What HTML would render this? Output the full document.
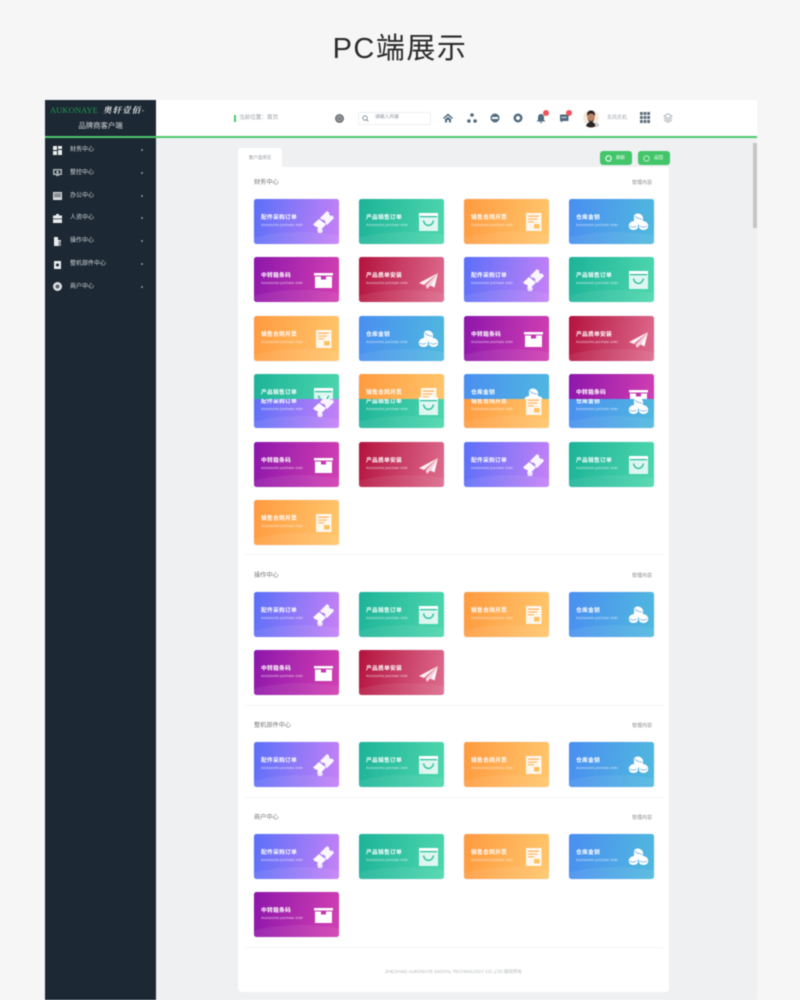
<!DOCTYPE html>
<html lang="zh-CN">
<head>
<meta charset="utf-8">
<title>PC端展示</title>
<style>
*{box-sizing:border-box;margin:0;padding:0}
html{background:#f6f6f6}
html,body{width:800px;height:1000px;overflow:hidden}
body{position:relative;font-family:"Liberation Sans","Noto Sans CJK SC",sans-serif;filter:blur(.4px)}
.abs,.c,.t,.s{position:absolute}
h1{position:absolute;left:0;width:800px;top:27px;text-align:center;font:400 29px/44px "Liberation Sans","Noto Sans CJK SC",sans-serif;color:#2b2b2b;letter-spacing:1.5px}
.side{position:absolute;left:45px;top:100px;width:111px;height:900px;background:#1c2833}
.main{position:absolute;left:156px;top:138px;width:601px;height:862px;background:#eef0f1}
.head{position:absolute;left:156px;top:100px;width:601px;height:36px;background:#fff}
.line{position:absolute;left:45px;top:136px;width:712px;height:2px;background:#4cc76c}
.panel{position:absolute;left:238px;top:167px;width:431px;height:825px;background:#fff;border-radius:0 0 4px 4px}
.tab{position:absolute;left:238px;top:148px;width:44px;height:19px;background:#fff;border-radius:3px 3px 0 0;color:#8a9096;font-size:4.5px;line-height:20px;text-align:center}
.bar{position:absolute;left:753px;top:143px;width:4px;height:85px;background:#c4c6c8}
.btn{position:absolute;top:151px;width:32px;height:14px;background:#43c669;border-radius:3px;color:#fff;font-size:4.5px;line-height:14px;padding-left:16px}
.btn svg{position:absolute;left:5px;top:3.5px;width:7px;height:7px}
.m{position:absolute;left:70px;margin-top:1px;color:#d2d6da;font-size:6px;line-height:8px}
.mi{position:absolute;left:53px;width:9px;height:9px}
.mi svg{display:block;width:9px;height:9px}
.ch{position:absolute;left:141px;width:2px;height:2px;background:#8d969d;border-radius:50%}
.sec{position:absolute;left:254px;margin-top:1px;color:#777;font-size:6.2px;line-height:8px}
.mng{position:absolute;left:632px;margin-top:1px;color:#8b8b8b;font-size:5px;line-height:8px}
.hr{position:absolute;left:245px;width:418px;height:1px;background:#f4f5f5}
.c{width:85px;height:45px;border-radius:2.5px;overflow:hidden;color:#fff;box-shadow:0 0 1px rgba(130,150,220,.35)}
.c:after{content:"";position:absolute;left:-20px;right:-30px;top:33px;height:40px;border-radius:50%;background:rgba(255,255,255,.07)}
.t{left:7px;top:15.5px;font-size:5.8px;line-height:7px;font-weight:700;white-space:nowrap;letter-spacing:.2px}
.s{left:7px;top:24px;font-size:3.4px;line-height:4px;white-space:nowrap;opacity:.7}
.c svg{position:absolute;left:59px;top:12px;width:21px;height:22px;z-index:1}
.a{background:linear-gradient(100deg,#5a70f9,#c781f6)}
.b{background:linear-gradient(100deg,#1db398,#4ed7ae)}
.o{background:linear-gradient(100deg,#ff9a3f,#ffc76d)}
.d{background:linear-gradient(100deg,#4a8ef1,#50b9de)}
.e{background:linear-gradient(100deg,#8d16ab,#d340b2)}
.f{background:linear-gradient(100deg,#b4133e,#de6c8e)}
.clip{position:absolute;left:254px;top:374px;width:400px;height:25px;overflow:hidden}
.hi{position:absolute;top:113px;width:10px;height:10px;fill:#4f6b80}
.dot{position:absolute;width:6px;height:6px;border-radius:50%;background:#f2545b;top:110px}
</style>
</head>
<body>
<svg width="0" height="0" style="position:absolute">
<symbol id="ia" viewBox="0 0 21 22"><g fill="#fff"><path fill-opacity=".92" d="M7 7L14 0l2.500 2-.5 1.500 2 1.500 1.500-.5L21 7l-7 7-2-2 .5-1.500-2-2-1.500.5z"/><path fill-opacity=".96" d="M0 13.500L6 8l7 5.500-6 6-2-1.500-.5-2-2-.5z"/><path fill-opacity=".8" d="M4 18l3-1 3 2-1 3H5z"/></g></symbol>
<symbol id="ib" viewBox="0 0 21 22"><path fill="#fff" fill-opacity=".82" d="M1 2h19v18H1z"/><path fill="#fff" d="M1 2h19v3H1z"/><path fill="#29bd9d" d="M2 5h17v1.300H2z"/><path fill="none" stroke="#35c3a2" stroke-width="1.500" d="M5.500 9.500c1 6.500 9 6.500 10 0"/></symbol>
<symbol id="io" viewBox="0 0 21 22"><path fill="#fff" fill-opacity=".88" d="M3 2h15.500v18H3z"/><path fill="#ffb259" d="M5 4.500h11v1.200H5zM5 7.500h9v1.100H5zM5 10.300h6v1.100H5z"/><path fill="#ffc05f" d="M11 13h5.500v4.500H11z"/></symbol>
<symbol id="id" viewBox="0 0 21 22"><g fill="#fff"><ellipse cx="10.500" cy="6.500" rx="4.800" ry="3.800" transform="rotate(25 10.500 6.500)"/><ellipse cx="10.500" cy="9.500" rx="4.800" ry="3.500" transform="rotate(25 10.500 9.500)"/><ellipse cx="5.500" cy="14" rx="4.800" ry="3.800" transform="rotate(-20 5.500 14)"/><ellipse cx="15.500" cy="14" rx="4.800" ry="3.800" transform="rotate(20 15.500 14)"/><ellipse cx="15.500" cy="16" rx="4.500" ry="3"/><ellipse cx="5.500" cy="16" rx="4.500" ry="3"/></g><g fill="none" stroke="#5aa4e6" stroke-width=".7"><path d="M7 5c2 2.500 4.500 3 7 3M1.500 15c2 1.500 5 1.500 7 0M12 15c2 1.500 5 1.500 7 0"/></g></symbol>
<symbol id="ie" viewBox="0 0 21 22"><path fill="#fff" d="M1 4h19v2.500H1zM2 7.500h6v3h5v-3h6V19H2z"/></symbol>
<symbol id="if" viewBox="0 0 21 22"><path fill="#fff" fill-opacity=".9" d="M20 4L1 14l5 2z"/><path fill="#fff" fill-opacity=".72" d="M20 4L7.500 16.500 9 20l3-3z"/><path fill="#fff" fill-opacity=".95" d="M20 4l-7.500 12.500 4 2z"/></symbol>
</svg>

<h1>PC端展示</h1>

<div class="main"></div>
<div class="head"></div>
<div class="side"></div>
<div class="line"></div>
<div class="bar"></div>

<div class="abs" style="left:50px;top:104px;font:8.6px/12px 'Liberation Serif',serif;color:#1f9b4d;white-space:nowrap">AUKONAYE</div>
<div class="abs" style="left:103px;top:104px;font:italic 700 8.4px/12px 'Noto Serif CJK SC',serif;color:#e5e8ea;white-space:nowrap;letter-spacing:1.2px">奥轩壹佰<span style="font-size:4px">®</span></div>
<div class="abs" style="left:45px;width:111px;top:121px;text-align:center;font-size:7.4px;line-height:10px;color:#d5d9dc">品牌商客户端</div>

<div class="mi" style="top:146px"><svg viewBox="0 0 9 9" fill="#eceff0"><path d="M0 0h4v4H0zM5 0h4v3H5zM0 5h4v4H0zM5 4h4v5H5z"/></svg></div><div class="m" style="top:145px">财务中心</div><div class="ch" style="top:149px"></div>
<div class="mi" style="top:168px"><svg viewBox="0 0 9 9"><path fill="#aab1b6" d="M0 1h9v6H6v1H3V7H0z"/><path fill="#1c2833" d="M1.500 2.500h6v3h-6z"/><path fill="#e6e9eb" d="M3.500 3.200h2v1.800h-2z"/></svg></div><div class="m" style="top:168px">整控中心</div><div class="ch" style="top:172px"></div>
<div class="mi" style="top:191px"><svg viewBox="0 0 9 9"><path fill="#dcdfe2" d="M0 1h9v8H0z"/><path fill="#8a9197" d="M1 2h7v4.500H1z"/></svg></div><div class="m" style="top:191px">办公中心</div><div class="ch" style="top:195px"></div>
<div class="mi" style="top:214px"><svg viewBox="0 0 9 9" fill="#e9ecee"><path d="M3 0h3v1.500h3V9H0V1.500h3z"/><path fill="#1c2833" d="M0 4.500h9v.7H0z"/></svg></div><div class="m" style="top:213px">人资中心</div><div class="ch" style="top:217px"></div>
<div class="mi" style="top:237px"><svg viewBox="0 0 9 9" fill="#e9ecee"><path d="M1 0h4v3h3v6H1z"/><path fill="#8a9197" d="M5.500 4H8v5H5.500z"/></svg></div><div class="m" style="top:236px">操作中心</div><div class="ch" style="top:240px"></div>
<div class="mi" style="top:260px"><svg viewBox="0 0 9 9" fill="#e9ecee"><path d="M1 1h7v8H1z"/><circle cx="4.500" cy="5" r="1.500" fill="#1c2833"/></svg></div><div class="m" style="top:259px">整机部件中心</div><div class="ch" style="top:263px"></div>
<div class="mi" style="top:282px"><svg viewBox="0 0 9 9"><circle cx="4.500" cy="4.500" r="4.500" fill="#dfe2e4"/><circle cx="4.500" cy="4.500" r="2" fill="#5c656c"/></svg></div><div class="m" style="top:282px">商户中心</div><div class="ch" style="top:286px"></div>

<div class="abs" style="left:234px;top:115px;width:2px;height:7px;background:#4cc76c"></div>
<div class="abs" style="left:239px;top:114px;font-size:5.6px;line-height:8px;color:#9aa0a5;white-space:nowrap">当前位置：首页</div>
<svg class="abs" style="left:335px;top:114px" width="9" height="9" viewBox="0 0 9 9"><circle cx="4.500" cy="4.500" r="4.500" fill="#74787c"/><circle cx="4.500" cy="4.500" r="2" fill="none" stroke="#c4c6c8" stroke-width=".7"/></svg>
<div class="abs" style="left:358px;top:112px;width:73px;height:13px;border:1px solid #eceef0;border-radius:2px"></div>
<svg class="abs" style="left:362px;top:115px" width="7" height="7" viewBox="0 0 7 7"><circle cx="3" cy="3" r="2.2" fill="none" stroke="#77828a" stroke-width=".8"/><path d="M4.700 4.700L6.500 6.500" stroke="#77828a" stroke-width=".8"/></svg>
<div class="abs" style="left:375px;top:114px;font-size:4.8px;line-height:8px;color:#8b9298;white-space:nowrap">请输入内容</div>

<svg class="hi" style="left:443px" viewBox="0 0 10 10"><path d="M5 .5L10 5 9 6 5 2.500 1 6 0 5zM2 6.200L5 3.700l3 2.500V9.500H6V7H4v2.500H2z"/></svg>
<svg class="hi" style="left:467px" viewBox="0 0 10 10"><circle cx="5" cy="2" r="1.800"/><circle cx="1.900" cy="8" r="1.800"/><circle cx="8.100" cy="8" r="1.800"/></svg>
<svg class="hi" style="left:490px" viewBox="0 0 10 10"><path fill-rule="evenodd" d="M5 .5a4.500 4.500 0 1 1 0 9 4.500 4.500 0 0 1 0-9zM2 4v2h6V4z"/></svg>
<svg class="hi" style="left:513px" viewBox="0 0 10 10"><path fill-rule="evenodd" d="M5 .5a4.500 4.500 0 1 1 0 9 4.500 4.500 0 0 1 0-9zM5 3a2 2 0 1 0 0 4 2 2 0 0 0 0-4z"/></svg>
<svg class="hi" style="left:536px" viewBox="0 0 10 10"><path d="M5 1c2 0 3 1.500 3 3.500V7l1.500 1.500h-9L2 7V4.500C2 2.500 3 1 5 1zM4 9h2v1H4z"/></svg>
<svg class="hi" style="left:559px" viewBox="0 0 10 10"><path d="M1 1.500h8.500V8H4L2 9.500V8H1z"/><path fill="#fff" d="M2.500 4h5v.8h-5z"/></svg>
<div class="dot" style="left:543px"></div>
<div class="dot" style="left:566px"></div>

<svg class="abs" style="left:583px;top:109px" width="17" height="19" viewBox="0 0 17 19">
<circle cx="8" cy="9" r="8" fill="#f6e9df"/>
<path fill="#2a2522" d="M3 17c1-3 3-4 5-4s4 1 5 4c-3 2-7 2-10 0z"/>
<ellipse cx="8" cy="8" rx="3.8" ry="5" fill="#b98562"/>
<path fill="#26211f" d="M4 7c-.5-4 2-5.500 4-5.500S12.500 3 12 7c-1-2-3-2.500-4-2.500S5 5 4 7zM5.500 10c1 3 4 3 5 0 0 3-1 3.500-2.500 3.500S5.500 13 5.500 10z"/>
<circle cx="14" cy="16" r="2" fill="#c9cdd0"/>
</svg>
<div class="abs" style="left:607px;top:114px;font-size:5px;line-height:8px;color:#a0a6ab;white-space:nowrap">东风农机</div>
<svg class="abs" style="left:640px;top:112px" width="10" height="11" viewBox="0 0 10 11" fill="#5e6d78"><path d="M0 0h2.800v3H0zM3.600 0h2.800v3H3.600zM7.200 0H10v3H7.200zM0 4h2.800v3H0zM3.600 4h2.800v3H3.600zM7.200 4H10v3H7.200zM0 8h2.800v3H0zM3.600 8h2.800v3H3.600zM7.200 8H10v3H7.200z"/></svg>
<svg class="abs" style="left:663px;top:113px" width="10" height="10" viewBox="0 0 10 10" fill="none" stroke="#a6b0b6" stroke-width=".9"><path d="M5 .8L9 3 5 5.400 1 3zM1 5l4 2.400L9 5M1 7l4 2.300L9 7"/></svg>

<div class="tab">客户选项页</div>
<div class="btn" style="left:600px"><svg viewBox="0 0 7 7"><circle cx="3.500" cy="3.500" r="2.700" fill="none" stroke="#fff"/></svg>刷新</div>
<div class="btn" style="left:638px"><svg viewBox="0 0 7 7"><circle cx="3.500" cy="3.500" r="2.700" fill="none" stroke="#d5f5de" stroke-width=".8"/></svg>返回</div>

<div class="panel"></div>

<div class="sec" style="top:178px">财务中心</div><div class="mng" style="top:178px">管理内容</div>

<div class="c a" style="left:254px;top:199px"><div class="t">配件采购订单</div><div class="s">Accessories purchase order</div><svg><use href="#ia"/></svg></div>
<div class="c b" style="left:359px;top:199px"><div class="t">产品销售订单</div><div class="s">Accessories purchase order</div><svg><use href="#ib"/></svg></div>
<div class="c o" style="left:464px;top:199px"><div class="t">销售合同开票</div><div class="s">Accessories purchase order</div><svg><use href="#io"/></svg></div>
<div class="c d" style="left:569px;top:199px"><div class="t">仓库金钥</div><div class="s">Accessories purchase order</div><svg><use href="#id"/></svg></div>

<div class="c e" style="left:254px;top:257px"><div class="t">中转箱条码</div><div class="s">Accessories purchase order</div><svg><use href="#ie"/></svg></div>
<div class="c f" style="left:359px;top:257px"><div class="t">产品质单安装</div><div class="s">Accessories purchase order</div><svg><use href="#if"/></svg></div>
<div class="c a" style="left:464px;top:257px"><div class="t">配件采购订单</div><div class="s">Accessories purchase order</div><svg><use href="#ia"/></svg></div>
<div class="c b" style="left:569px;top:257px"><div class="t">产品销售订单</div><div class="s">Accessories purchase order</div><svg><use href="#ib"/></svg></div>

<div class="c o" style="left:254px;top:316px"><div class="t">销售合同开票</div><div class="s">Accessories purchase order</div><svg><use href="#io"/></svg></div>
<div class="c d" style="left:359px;top:316px"><div class="t">仓库金钥</div><div class="s">Accessories purchase order</div><svg><use href="#id"/></svg></div>
<div class="c e" style="left:464px;top:316px"><div class="t">中转箱条码</div><div class="s">Accessories purchase order</div><svg><use href="#ie"/></svg></div>
<div class="c f" style="left:569px;top:316px"><div class="t">产品质单安装</div><div class="s">Accessories purchase order</div><svg><use href="#if"/></svg></div>

<div class="c a" style="left:254px;top:383px"><div class="t">配件采购订单</div><div class="s">Accessories purchase order</div><svg><use href="#ia"/></svg></div>
<div class="c b" style="left:359px;top:383px"><div class="t">产品销售订单</div><div class="s">Accessories purchase order</div><svg><use href="#ib"/></svg></div>
<div class="c o" style="left:464px;top:383px"><div class="t">销售合同开票</div><div class="s">Accessories purchase order</div><svg><use href="#io"/></svg></div>
<div class="c d" style="left:569px;top:383px"><div class="t">仓库金钥</div><div class="s">Accessories purchase order</div><svg><use href="#id"/></svg></div>

<div class="clip">
<div class="c b" style="left:0;top:0"><div class="t">产品销售订单</div><div class="s">Accessories purchase order</div><svg><use href="#ib"/></svg></div>
<div class="c o" style="left:105px;top:0"><div class="t">销售合同开票</div><div class="s">Accessories purchase order</div><svg><use href="#io"/></svg></div>
<div class="c d" style="left:210px;top:0"><div class="t">仓库金钥</div><div class="s">Accessories purchase order</div><svg><use href="#id"/></svg></div>
<div class="c e" style="left:315px;top:0"><div class="t">中转箱条码</div><div class="s">Accessories purchase order</div><svg><use href="#ie"/></svg></div>
</div>

<div class="c e" style="left:254px;top:442px"><div class="t">中转箱条码</div><div class="s">Accessories purchase order</div><svg><use href="#ie"/></svg></div>
<div class="c f" style="left:359px;top:442px"><div class="t">产品质单安装</div><div class="s">Accessories purchase order</div><svg><use href="#if"/></svg></div>
<div class="c a" style="left:464px;top:442px"><div class="t">配件采购订单</div><div class="s">Accessories purchase order</div><svg><use href="#ia"/></svg></div>
<div class="c b" style="left:569px;top:442px"><div class="t">产品销售订单</div><div class="s">Accessories purchase order</div><svg><use href="#ib"/></svg></div>

<div class="c o" style="left:254px;top:500px"><div class="t">销售合同开票</div><div class="s">Accessories purchase order</div><svg><use href="#io"/></svg></div>

<div class="hr" style="top:554px"></div>

<div class="sec" style="top:571px">操作中心</div><div class="mng" style="top:571px">管理内容</div>
<div class="c a" style="left:254px;top:592px"><div class="t">配件采购订单</div><div class="s">Accessories purchase order</div><svg><use href="#ia"/></svg></div>
<div class="c b" style="left:359px;top:592px"><div class="t">产品销售订单</div><div class="s">Accessories purchase order</div><svg><use href="#ib"/></svg></div>
<div class="c o" style="left:464px;top:592px"><div class="t">销售合同开票</div><div class="s">Accessories purchase order</div><svg><use href="#io"/></svg></div>
<div class="c d" style="left:569px;top:592px"><div class="t">仓库金钥</div><div class="s">Accessories purchase order</div><svg><use href="#id"/></svg></div>
<div class="c e" style="left:254px;top:650px"><div class="t">中转箱条码</div><div class="s">Accessories purchase order</div><svg><use href="#ie"/></svg></div>
<div class="c f" style="left:359px;top:650px"><div class="t">产品质单安装</div><div class="s">Accessories purchase order</div><svg><use href="#if"/></svg></div>

<div class="hr" style="top:705px"></div>

<div class="sec" style="top:721px">整机部件中心</div><div class="mng" style="top:721px">管理内容</div>
<div class="c a" style="left:254px;top:742px"><div class="t">配件采购订单</div><div class="s">Accessories purchase order</div><svg><use href="#ia"/></svg></div>
<div class="c b" style="left:359px;top:742px"><div class="t">产品销售订单</div><div class="s">Accessories purchase order</div><svg><use href="#ib"/></svg></div>
<div class="c o" style="left:464px;top:742px"><div class="t">销售合同开票</div><div class="s">Accessories purchase order</div><svg><use href="#io"/></svg></div>
<div class="c d" style="left:569px;top:742px"><div class="t">仓库金钥</div><div class="s">Accessories purchase order</div><svg><use href="#id"/></svg></div>

<div class="hr" style="top:797px"></div>

<div class="sec" style="top:813px">商户中心</div><div class="mng" style="top:813px">管理内容</div>
<div class="c a" style="left:254px;top:834px"><div class="t">配件采购订单</div><div class="s">Accessories purchase order</div><svg><use href="#ia"/></svg></div>
<div class="c b" style="left:359px;top:834px"><div class="t">产品销售订单</div><div class="s">Accessories purchase order</div><svg><use href="#ib"/></svg></div>
<div class="c o" style="left:464px;top:834px"><div class="t">销售合同开票</div><div class="s">Accessories purchase order</div><svg><use href="#io"/></svg></div>
<div class="c d" style="left:569px;top:834px"><div class="t">仓库金钥</div><div class="s">Accessories purchase order</div><svg><use href="#id"/></svg></div>
<div class="c e" style="left:254px;top:892px"><div class="t">中转箱条码</div><div class="s">Accessories purchase order</div><svg><use href="#ie"/></svg></div>

<div class="hr" style="top:947px"></div>

<div class="abs" style="left:238px;width:431px;top:968px;text-align:center;font-size:4.5px;line-height:8px;color:#b0b4b8;white-space:nowrap">ZHEJIANG AUKONAYE DIGITAL TECHNOLOGY CO.,LTD 版权所有</div>
</body>
</html>
